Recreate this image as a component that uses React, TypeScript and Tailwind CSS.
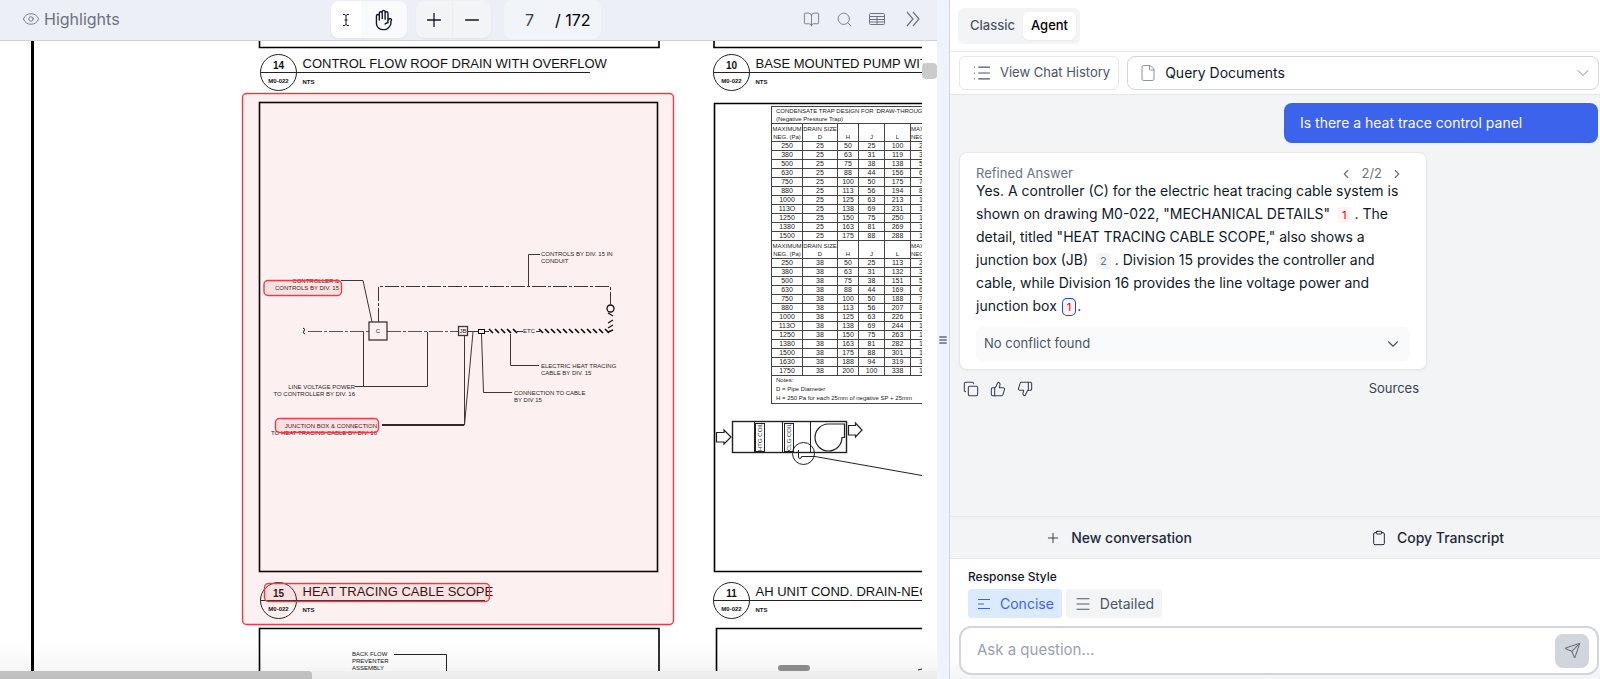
import type { ReactNode } from "react";
import {
  BookOpen,
  ChevronDown,
  ChevronLeft,
  ChevronRight,
  Clipboard,
  Copy,
  Eye,
  File,
  List,
  Menu,
  Minus,
  Plus,
  Search,
  Send,
  ThumbsDown,
  ThumbsUp,
} from "lucide-react";
import { HiOutlineHandRaised } from "react-icons/hi2";

const trapTables = [
  {
    drain: "25",
    rows: [
      ["250", "50", "25", "100", "250"],
      ["380", "63", "31", "119", "380"],
      ["500", "75", "38", "138", "500"],
      ["630", "88", "44", "156", "630"],
      ["750", "100", "50", "175", "750"],
      ["880", "113", "56", "194", "880"],
      ["1000", "125", "63", "213", "1000"],
      ["113O", "138", "69", "231", "1130"],
      ["1250", "150", "75", "250", "1250"],
      ["1380", "163", "81", "269", "1380"],
      ["1500", "175", "88", "288", "1500"],
    ],
  },
  {
    drain: "38",
    rows: [
      ["250", "50", "25", "113", "250"],
      ["380", "63", "31", "132", "380"],
      ["500", "75", "38", "151", "500"],
      ["630", "88", "44", "169", "630"],
      ["750", "100", "50", "188", "750"],
      ["880", "113", "56", "207", "880"],
      ["1000", "125", "63", "226", "1000"],
      ["113O", "138", "69", "244", "1130"],
      ["1250", "150", "75", "263", "1250"],
      ["1380", "163", "81", "282", "1380"],
      ["1500", "175", "88", "301", "1500"],
      ["1630", "188", "94", "319", "1630"],
      ["1750", "200", "100", "338", "1750"],
    ],
  },
];

interface DetailTitleProps {
  x: number;
  y: number;
  number: string;
  title: string;
  lineEnd: number;
}

/** Round detail marker with its number, sheet and title. */
function DetailTitle({ x, y, number, title, lineEnd }: DetailTitleProps) {
  return (
    <g>
      <circle cx={x} cy={y} r={18} fill="none" stroke="#222" />
      <path d={`M${x - 18} ${y}H${lineEnd}`} stroke="#222" />
      <text x={x} y={y - 4} textAnchor="middle" className="text-[10px] font-bold">
        {number}
      </text>
      <text x={x} y={y + 10} textAnchor="middle" className="text-[6px] font-bold">
        M0-022
      </text>
      <text x={x + 24} y={y - 5} className="text-[13px]">
        {title}
      </text>
      <text x={x + 24} y={y + 11} className="text-[6px] font-bold">
        NTS
      </text>
    </g>
  );
}

/** Slanted ticks that mark a heat traced run. */
function Ticks({ from, to, y }: { from: number; to: number; y: number }) {
  const ticks = [];
  for (let x = from; x < to; x += 6) ticks.push(`M${x} ${y - 2}l4 4`);
  return <path d={ticks.join("")} stroke="#000" strokeWidth={1.7} />;
}

function HeatTracingDetail() {
  return (
    <g fill="none" stroke="#333" strokeWidth={1}>
      <rect x={259.5} y={102.5} width={398} height={469} stroke="#000" strokeWidth={1.6} />
      <path d="M378.5 322V286.5H610.5V304" strokeDasharray="14 2 3 2" />
      <path d="M308 331.5H369M387 331.5H458" stroke="#555" strokeDasharray="14 2 3 2" />
      <path d="M303 328q3 1 1 3t1 3" stroke="#111" />
      <rect x={369} y={322} width={18} height={18} strokeWidth={1.3} />
      <rect x={458.5} y={326.5} width={9} height={9} strokeWidth={1.3} />
      <path d="M468 331.5H478M485 331.5H489M517 331.5H523M536 331.5H540" />
      <rect x={478.5} y={329.5} width={6} height={4} stroke="#000" />
      <Ticks from={489} to={517} y={331} />
      <Ticks from={539} to={606} y={331} />
      <path d="M608 313l5 3M613 320l-5 3M608 328l5-3M608 332l5-2" stroke="#111" strokeWidth={1.4} />
      <circle cx={610.5} cy={308.5} r={3.5} stroke="#000" strokeWidth={1.3} />
      <path d="M540 254.5H528.5V286" />
      <path d="M341 280.5H363L372 322" />
      <path d="M355 386.5H427.5V332M363.5 332V386" />
      <path d="M382 425H464.5V336M464.5 425L473 332" />
      <path d="M382 425H464" stroke="#000" strokeWidth={1.4} />
      <path d="M481.5 334L483.5 392.5H512" />
      <path d="M510.5 334V365.5H539" />
      <g fill="#222" stroke="none" className="text-[6px]">
        <text x={541} y={256}>CONTROLS BY DIV. 15 IN</text>
        <text x={541} y={263}>CONDUIT</text>
        <text x={339} y={283} textAnchor="end">CONTROLLER &amp;</text>
        <text x={339} y={290} textAnchor="end">CONTROLS BY DIV. 15</text>
        <text x={378} y={333} textAnchor="middle">C</text>
        <text x={463} y={333} textAnchor="middle">JB</text>
        <text x={529} y={333} textAnchor="middle">ETC</text>
        <text x={541} y={368}>ELECTRIC HEAT TRACING</text>
        <text x={541} y={375}>CABLE BY DIV. 15</text>
        <text x={514} y={395}>CONNECTION TO CABLE</text>
        <text x={514} y={402}>BY DIV 15</text>
        <text x={355} y={389} textAnchor="end">LINE VOLTAGE POWER</text>
        <text x={355} y={396} textAnchor="end">TO CONTROLLER BY DIV. 16</text>
        <text x={377} y={428} textAnchor="end">JUNCTION BOX &amp; CONNECTION</text>
        <text x={377} y={435} textAnchor="end">TO HEAT TRACING CABLE BY DIV. 16</text>
      </g>
    </g>
  );
}

function AirHandlerDetail() {
  return (
    <g fill="none" stroke="#222" strokeWidth={1}>
      <path d="M922 103.5H714.5V571.5H922" stroke="#000" strokeWidth={1.6} />
      <rect x={732.5} y={421.5} width={114} height={31} strokeWidth={1.4} />
      <path d="M754.5 421V452M782.5 421V452M810.5 421V452" />
      <rect x={755.5} y={423.5} width={9} height={28} />
      <rect x={784.5} y={423.5} width={9} height={28} />
      <path d="M828 424H844.5V437.5H842A13.5 13.5 0 1 1 828 424" strokeWidth={1.2} />
      <circle cx={803.5} cy={453.5} r={11} />
      <path d="M798.5 450V457Q799 460 801 458L801.5 456.5H815L922 475.5" />
      <path d="M716.5 432.5H724V430L731 437L724 444V442H716.5Z" strokeWidth={1.2} />
      <path d="M848.5 425.5H855.5V423L862 430L855.5 437V435H848.5Z" strokeWidth={1.2} />
      <g fill="#222" stroke="none" className="text-[6px]">
        <text transform="translate(762 451) rotate(-90)">HTG COIL</text>
        <text transform="translate(791 451) rotate(-90)">CLG COIL</text>
      </g>
    </g>
  );
}

function TrapTable() {
  const cell = "border border-[#444] p-0 text-center font-normal";

  return (
    <table className="absolute top-[65px] left-[771px] w-[184px] table-fixed border-collapse text-[7px] leading-[8px] text-[#222]">
      <colgroup>
        <col className="w-[31px]" />
        <col className="w-[35px]" />
        <col className="w-[21px]" />
        <col className="w-[26px]" />
        <col className="w-[26px]" />
        <col className="w-[45px]" />
      </colgroup>
      <tbody>
        <tr>
          <td colSpan={6} className="h-[17px] border border-[#444] p-0 pl-1 text-[6px] whitespace-nowrap">
            CONDENSATE TRAP DESIGN FOR 'DRAW-THROUGH'
            <br />
            (Negative Pressure Trap)
          </td>
        </tr>
      </tbody>
      {trapTables.map(({ drain, rows }) => (
        <tbody key={drain}>
          <tr className="h-[18px] text-[6px] whitespace-nowrap">
            <th className={cell}>MAXIMUM<br />NEG. (Pa)</th>
            <th className={cell}>DRAIN SIZE<br />D</th>
            <th className={`${cell} align-bottom`}>H</th>
            <th className={`${cell} align-bottom`}>J</th>
            <th className={`${cell} align-bottom`}>L</th>
            <th className="border border-[#444] p-0 text-left font-normal">
              MAXIMUM
              <br />
              NEG. (Pa)
            </th>
          </tr>
          {rows.map(([neg, h, j, l, next]) => (
            <tr key={neg} className="h-[9px]">
              <td className={cell}>{neg}</td>
              <td className={cell}>{drain}</td>
              <td className={cell}>{h}</td>
              <td className={cell}>{j}</td>
              <td className={cell}>{l}</td>
              <td className="border border-[#444] p-0 pl-2">{next}</td>
            </tr>
          ))}
        </tbody>
      ))}
      <tbody>
        <tr>
          <td colSpan={6} className="h-[28px] border border-[#444] p-0 pl-1 text-[6px] leading-[9px] whitespace-nowrap">
            Notes:
            <br />
            D = Pipe Diameter
            <br />H = 250 Pa for each 25mm of negative SP + 25mm
          </td>
        </tr>
      </tbody>
    </table>
  );
}

/** One sheet of the drawing set, with its highlighted regions. */
function DrawingSheet() {
  return (
    <div className="relative min-w-0 flex-1 overflow-hidden bg-white font-['Liberation_Sans',sans-serif]">
      <svg viewBox="0 41 922 630" className="block h-[630px] w-[922px] max-w-none" fill="#111">
        <path d="M32.5 41V671" stroke="#000" strokeWidth={3} />
        <g fill="none" stroke="#000" strokeWidth={1.6}>
          <path d="M259.5 41V47.5H659V41M714 41V47.5H922" />
          <path d="M259.5 671V628.5H659V671M716.5 671V628.5H922" />
        </g>
        <DetailTitle x={278.5} y={72.5} number="14" title="CONTROL FLOW ROOF DRAIN WITH OVERFLOW" lineEnd={590} />
        <DetailTitle x={731.5} y={72.5} number="10" title="BASE MOUNTED PUMP WITH" lineEnd={922} />
        <DetailTitle x={278.5} y={600.5} number="15" title="HEAT TRACING CABLE SCOPE" lineEnd={485} />
        <DetailTitle x={731.5} y={600.5} number="11" title="AH UNIT COND. DRAIN-NEGATIVE" lineEnd={922} />
        <HeatTracingDetail />
        <AirHandlerDetail />
        <g className="text-[6px]">
          <text x={352} y={656}>BACK FLOW</text>
          <text x={352} y={663}>PREVENTER</text>
          <text x={352} y={670}>ASSEMBLY</text>
          <path d="M394 654.5H446.5V671M918 670l4-1" fill="none" stroke="#222" />
        </g>
        <g fill="#e04444" fillOpacity={0.08} stroke="#ee3b46" strokeWidth={1.4}>
          <rect x={242.5} y={93.5} width={431} height={531} rx={4} />
          <rect x={264} y={280.5} width={77.5} height={15} rx={4} />
          <rect x={275.5} y={418.5} width={103} height={14} rx={4} />
          <rect x={264.5} y={583.5} width={225} height={18} rx={4} />
        </g>
      </svg>
      <TrapTable />
    </div>
  );
}

function ToolButton({ label, className = "", children }: { label: string; className?: string; children: ReactNode }) {
  return (
    <button type="button" aria-label={label} className={`flex items-center justify-center ${className}`}>
      {children}
    </button>
  );
}

function ViewerToolbar() {
  return (
    <header className="relative flex h-[41px] shrink-0 items-center justify-between border-b border-[#cdd2da] bg-[#eceff5] pr-4 pb-0.5 pl-[22px] text-gray-500">
      <button type="button" className="flex items-center gap-1 text-base">
        <Eye size={18} strokeWidth={1.2} />
        Highlights
      </button>
      <div className="absolute inset-y-0 left-[331px] flex items-start text-gray-900">
        <div className="mt-px flex h-[37px] overflow-hidden rounded-lg shadow-xs">
          <ToolButton label="Select text" className="w-[30px] bg-white">
            <svg width="8" height="14" viewBox="0 0 8 14" fill="none" stroke="currentColor">
              <path d="M1 1.5h2l1 1 1-1h2M1 12.5h2l1-1 1 1h2M4 2v10M2.5 7h3" />
            </svg>
          </ToolButton>
          <ToolButton label="Pan" className="w-[46px] bg-[#f9fafc]">
            <HiOutlineHandRaised size={22} />
          </ToolButton>
        </div>
        <div className="mt-px ml-[9px] flex h-[37px] overflow-hidden rounded-lg bg-[#f2f4f6] shadow-xs">
          <ToolButton label="Zoom in" className="w-[37px] border-r border-[#eceef1]">
            <Plus size={22} strokeWidth={1.4} />
          </ToolButton>
          <ToolButton label="Zoom out" className="w-[38px]">
            <Minus size={22} strokeWidth={1.4} />
          </ToolButton>
        </div>
        <label className="ml-[13px] flex h-[39px] w-[97px] items-center rounded-lg bg-[#f1f4f9] pl-[21px] text-base text-black">
          <input aria-label="Page" defaultValue="7" className="w-[30px] bg-transparent text-gray-700 outline-none" />
          <span>/ 172</span>
        </label>
      </div>
      <div className="flex items-center gap-4">
        <ToolButton label="Page view"><BookOpen size={17} strokeWidth={1.2} /></ToolButton>
        <ToolButton label="Search"><Search size={17} strokeWidth={1.2} /></ToolButton>
        <ToolButton label="Table view">
          <svg width="16" height="14" viewBox="0 0 16 14" fill="none" stroke="currentColor">
            <rect x="0.5" y="1.5" width="15" height="11" rx="1" />
            <path d="M0.5 4.5h15M0.5 7.5h15M0.5 10h15M8 4.5v8" />
          </svg>
        </ToolButton>
        <ToolButton label="More tools" className="ml-1">
          <svg width="16" height="16" viewBox="0 0 16 16" fill="none" stroke="currentColor" strokeWidth="1.2">
            <path d="M2 1l6 7-6 7M8 1l6 7-6 7" />
          </svg>
        </ToolButton>
      </div>
    </header>
  );
}

function Viewer() {
  return (
    <main className="relative flex min-w-0 flex-[937_1_0%] flex-col overflow-hidden">
      <ViewerToolbar />
      <div className="flex min-h-0 flex-1">
        <DrawingSheet />
        <div className="w-[15px] bg-white pt-[22px]">
          <div className="h-4 rounded-sm bg-[#cbcbcb]" />
        </div>
      </div>
      <div className="h-2 shrink-0 bg-[#f8f8f8]">
        <div className="h-full w-1/3 rounded-tr-sm bg-[#c9c9c9]" />
      </div>
      <div className="pointer-events-none absolute inset-x-0 bottom-0 h-9 bg-linear-to-t from-black/5 to-transparent" />
      <div className="absolute bottom-2 left-[778px] h-1.5 w-8 rounded-full bg-[#8b8b8b]" />
    </main>
  );
}

function Citation({ children, tone }: { children: ReactNode; tone: "red" | "gray" | "active" }) {
  const tones = {
    red: "mx-1 bg-red-50 text-red-600",
    gray: "mx-1 bg-gray-100 text-gray-500",
    active: "mx-0.5 bg-red-50 text-red-600 ring-1 ring-blue-700",
  };

  return (
    <button type="button" className={`h-4 rounded-sm px-1 align-baseline text-[11px] leading-4 ${tones[tone]}`}>
      {children}
    </button>
  );
}

function Answer() {
  return (
    <article className="rounded-lg border border-gray-200 bg-white px-4 pt-4 pb-2 shadow-xs">
      <div className="flex h-2.5 items-center justify-between pr-1.5 text-[13px] text-gray-500">
        <span>Refined Answer</span>
        <div className="flex items-center gap-2">
          <button type="button" aria-label="Previous answer"><ChevronLeft size={14} /></button>
          <span>2/2</span>
          <button type="button" aria-label="Next answer"><ChevronRight size={14} /></button>
        </div>
      </div>
      <p className="text-sm leading-[23px] text-gray-900">
        Yes. A controller (C) for the electric heat tracing cable system is shown on drawing M0-022,
        "MECHANICAL DETAILS" <Citation tone="red">1</Citation>. The detail, titled "HEAT TRACING CABLE
        SCOPE," also shows a junction box (JB) <Citation tone="gray">2</Citation>. Division 15 provides
        the controller and cable, while Division 16 provides the line voltage power and junction
        box <Citation tone="active">1</Citation>.
      </p>
      <button
        type="button"
        className="mt-2.5 flex h-[34px] w-full items-center justify-between rounded-md bg-gray-50 px-2 text-[13px] text-gray-600"
      >
        No conflict found
        <ChevronDown size={18} strokeWidth={1.5} />
      </button>
    </article>
  );
}

function ChatPanel() {
  return (
    <aside className="flex min-w-0 flex-[650_1_0%] flex-col border-l border-gray-300 bg-white">
      <div className="flex h-[52px] shrink-0 items-center border-b border-gray-200 px-2">
        <div className="flex rounded-md bg-gray-100 p-1 text-[13px] font-medium">
          <button type="button" className="h-7 px-2 text-gray-600">Classic</button>
          <button type="button" className="h-7 rounded-md bg-white px-2 text-black shadow-xs">Agent</button>
        </div>
      </div>

      <div className="flex h-[43px] shrink-0 items-center gap-2 border-b border-gray-200 pr-px pl-[9px]">
        <button
          type="button"
          className="flex h-[34px] items-center gap-2 rounded-md border border-gray-200 pr-2 pl-3 text-[13px] text-gray-600"
        >
          <List size={20} strokeWidth={1.4} />
          View Chat History
        </button>
        <div className="relative flex-1">
          <File size={18} strokeWidth={1} className="absolute top-2 left-3 text-gray-500" />
          <select
            aria-label="Query scope"
            className="h-[34px] w-full appearance-none rounded-lg border border-gray-300 bg-white pl-[37px] text-sm text-gray-900"
          >
            <option>Query Documents</option>
          </select>
          <ChevronDown size={20} strokeWidth={1} className="pointer-events-none absolute top-[7px] right-1.5 text-gray-500" />
        </div>
      </div>

      <section className="flex min-h-0 flex-1 flex-col bg-gray-100 pt-2 pr-0.5 pl-[9px]">
        <p className="w-[314px] self-end rounded-lg bg-[#3b63eb] px-4 py-2.5 text-sm text-white">
          Is there a heat trace control panel
        </p>
        <div className="mt-[9px] w-[468px] max-w-full">
          <Answer />
          <div className="flex items-center justify-between pt-[9px] pr-2 pl-1 text-[13px] text-gray-700">
            <div className="flex gap-[11px]">
              <button type="button" aria-label="Copy answer"><Copy size={16} strokeWidth={1.6} /></button>
              <button type="button" aria-label="Good answer"><ThumbsUp size={16} strokeWidth={1.6} /></button>
              <button type="button" aria-label="Bad answer"><ThumbsDown size={16} strokeWidth={1.6} /></button>
            </div>
            <button type="button">Sources</button>
          </div>
        </div>
      </section>

      <div className="grid h-[43px] shrink-0 grid-cols-2 border-y border-gray-200 bg-gray-100 text-sm font-medium text-gray-800">
        <button type="button" className="flex items-center justify-center gap-2.5 pl-3">
          <Plus size={16} strokeWidth={1.3} />
          New conversation
        </button>
        <button type="button" className="flex items-center justify-center gap-2.5">
          <Clipboard size={16} strokeWidth={1.5} />
          Copy Transcript
        </button>
      </div>

      <form className="shrink-0 bg-linear-to-b from-white from-80% to-gray-100 pt-2.5 pr-px pb-1 pl-[9px]">
        <fieldset className="pl-[9px]">
          <legend className="text-xs font-medium text-gray-900">Response Style</legend>
          <div className="mt-1 flex gap-1 text-sm">
            <button type="button" aria-pressed="true" className="flex h-[29px] items-center gap-2 rounded-sm bg-blue-100 px-2 text-[#3b63eb]">
              <svg width="16" height="16" viewBox="0 0 16 16" fill="none" stroke="currentColor">
                <path d="M2 3.5h12M2 8h6M2 12.5h12" />
              </svg>
              Concise
            </button>
            <button type="button" aria-pressed="false" className="flex h-[29px] items-center gap-2 rounded-sm bg-gray-100 px-2 text-gray-600">
              <Menu size={18} strokeWidth={1.3} />
              Detailed
            </button>
          </div>
        </fieldset>
        <div className="mt-2 flex h-[49px] items-center rounded-xl border-2 border-gray-300 bg-white pr-2 pl-4">
          <input
            aria-label="Question"
            placeholder="Ask a question..."
            className="min-w-0 flex-1 bg-transparent text-[15px] outline-none placeholder:text-gray-400"
          />
          <button type="submit" aria-label="Send" className="flex size-[34px] items-center justify-center rounded-lg bg-gray-300 text-gray-500">
            <Send size={17} strokeWidth={1.5} />
          </button>
        </div>
      </form>
    </aside>
  );
}

export default function App() {
  return (
    <div className="flex h-screen overflow-hidden bg-white font-[Inter,sans-serif]">
      <Viewer />
      <div className="flex w-3 shrink-0 items-center justify-center bg-[#eff3fd]">
        <Menu size={10} strokeWidth={2.5} className="text-gray-800" />
      </div>
      <ChatPanel />
    </div>
  );
}
